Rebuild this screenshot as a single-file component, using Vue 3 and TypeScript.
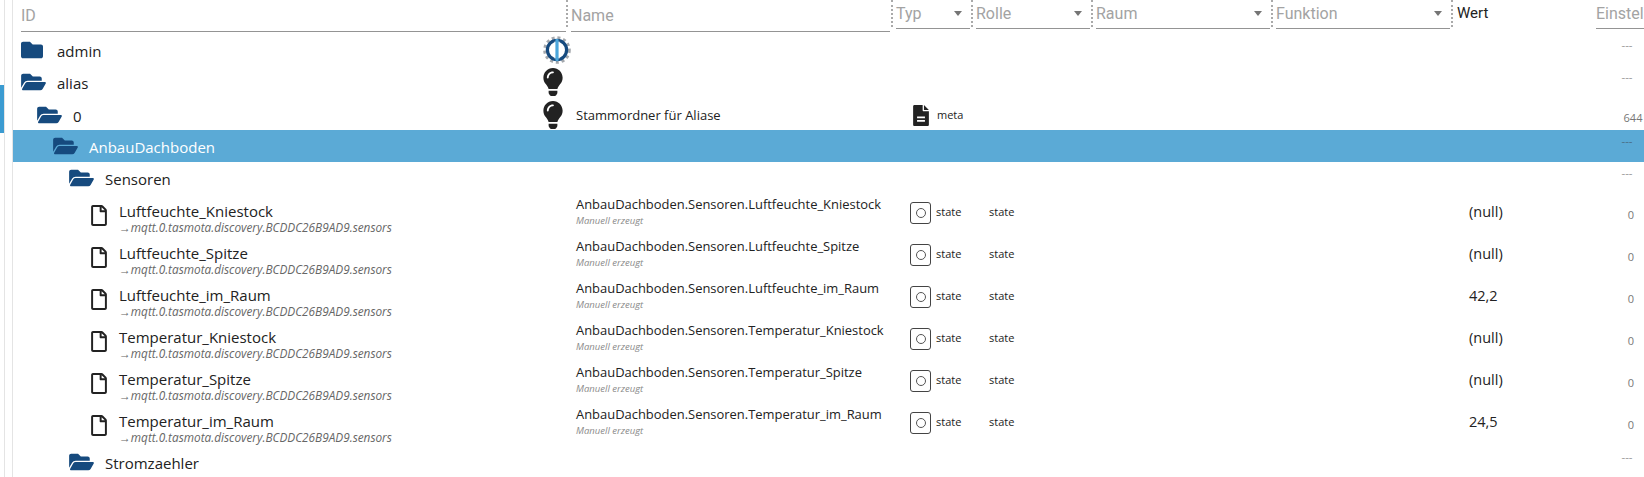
<script setup lang="ts">
interface FolderRow { label: string; level: number; open: boolean; icon?: 'logo' | 'lamp'; name?: string; meta?: boolean; size: string; selected?: boolean }
interface StateRow { label: string; name: string; value: string }

const topRows: FolderRow[] = [
  { label: 'admin', level: 0, open: false, icon: 'logo', size: '---' },
  { label: 'alias', level: 0, open: true, icon: 'lamp', size: '---' },
  { label: '0', level: 1, open: true, icon: 'lamp', name: 'Stammordner für Aliase', meta: true, size: '644' },
  { label: 'AnbauDachboden', level: 2, open: true, size: '---', selected: true },
  { label: 'Sensoren', level: 3, open: true, size: '---' },
]
const stateRows: StateRow[] = [
  { label: 'Luftfeuchte_Kniestock', name: 'AnbauDachboden.Sensoren.Luftfeuchte_Kniestock', value: '(null)' },
  { label: 'Luftfeuchte_Spitze', name: 'AnbauDachboden.Sensoren.Luftfeuchte_Spitze', value: '(null)' },
  { label: 'Luftfeuchte_im_Raum', name: 'AnbauDachboden.Sensoren.Luftfeuchte_im_Raum', value: '42,2' },
  { label: 'Temperatur_Kniestock', name: 'AnbauDachboden.Sensoren.Temperatur_Kniestock', value: '(null)' },
  { label: 'Temperatur_Spitze', name: 'AnbauDachboden.Sensoren.Temperatur_Spitze', value: '(null)' },
  { label: 'Temperatur_im_Raum', name: 'AnbauDachboden.Sensoren.Temperatur_im_Raum', value: '24,5' },
]
const filters = ['Typ', 'Rolle', 'Raum', 'Funktion']
const aliasTarget = '→mqtt.0.tasmota.discovery.BCDDC26B9AD9.sensors'
const folderClosed = 'M464 128H272l-64-64H48C21.49 64 0 85.49 0 112v288c0 26.51 21.49 48 48 48h416c26.51 0 48-21.49 48-48V176c0-26.51-21.49-48-48-48z'
const folderOpen = 'M572.694 292.093L500.27 416.248A63.997 63.997 0 0 1 444.989 448H45.025c-18.523 0-30.064-20.093-20.731-36.093l72.424-124.155A64 64 0 0 1 152 256h399.964c18.523 0 30.064 20.093 20.73 36.093zM152 224h328v-48c0-26.51-21.49-48-48-48H272l-64-64H48C21.49 64 0 85.49 0 112v278.046l69.077-118.418C86.214 242.25 117.989 224 152 224z'
const indent = (level: number) => ({ paddingLeft: `${8 + level * 16}px` })
</script>

<template>
  <div class="page">
    <div class="rail"><div class="rail-mark"></div></div>
    <div class="table">
      <div class="grid head">
        <div class="hcell id-head"><span class="field">ID</span></div>
        <div class="hcell name-head"><span class="field">Name</span></div>
        <div v-for="f in filters" :key="f" class="hcell select-head">
          <span class="field select">{{ f }}<i class="arrow"></i></span>
        </div>
        <div class="hcell value-head">Wert</div>
        <div class="hcell set-head"><span class="field select">Einstel</span></div>
      </div>

      <div v-for="r in topRows" :key="r.label" class="grid row" :class="{ selected: r.selected }">
        <div class="id-cell" :style="indent(r.level)">
          <svg v-if="r.open" class="folder open" viewBox="0 0 576 512"><path :d="folderOpen" /></svg>
          <svg v-else class="folder closed" viewBox="0 0 512 512"><path :d="folderClosed" /></svg>
          <span class="label">{{ r.label }}</span>
          <span v-if="r.icon" class="row-icon">
            <svg v-if="r.icon === 'logo'" class="logo" viewBox="0 0 28 28">
              <circle cx="14" cy="14" r="12.4" fill="none" stroke="#a4a8ad" stroke-width="2.8" stroke-dasharray="3 2.85" />
              <circle cx="14" cy="14" r="9.6" fill="#fff" stroke="#164a7e" stroke-width="3.2" />
              <rect x="11.4" y="5.6" width="5.2" height="16.8" fill="#fff" />
              <rect x="12.4" y="3" width="3.2" height="22" rx="1" fill="#4aa6dc" />
            </svg>
            <svg v-else class="lamp" viewBox="0 0 352 512">
              <path fill="#222" d="M96.06 454.35c.01 6.29 1.87 12.45 5.36 17.69l17.09 25.69a31.99 31.99 0 0 0 26.64 14.28h61.71a31.99 31.99 0 0 0 26.64-14.28l17.09-25.69a31.989 31.989 0 0 0 5.36-17.69l.04-38.35H96.01l.05 38.35zM0 176c0 44.37 16.45 84.85 43.56 115.78 16.52 18.85 42.36 58.23 52.21 91.45.04.26.07.52.11.78h160.24c.04-.26.07-.51.11-.78 9.85-33.22 35.69-72.6 52.21-91.45C335.55 260.85 352 220.37 352 176 352 78.61 272.91-.3 175.45 0 73.44.31 0 82.97 0 176zm176-80c-44.11 0-80 35.89-80 80 0 8.84-7.16 16-16 16s-16-7.16-16-16c0-61.76 50.24-112 112-112 8.84 0 16 7.16 16 16s-7.16 16-16 16z" />
            </svg>
          </span>
        </div>
        <div class="name-cell single">{{ r.name }}</div>
        <div class="typ-cell meta-cell">
          <template v-if="r.meta">
            <svg class="meta-icon" viewBox="0 0 384 512"><path fill="#222" fill-rule="evenodd" d="M232 0H32C14 0 0 14 0 32v448c0 18 14 32 32 32h320c18 0 32-14 32-32V152H256c-13 0-24-11-24-24V0zM264 0v120h120zM96 280h192v40H96zM96 368h192v40H96z" /></svg>
            <span class="typ-text">meta</span>
          </template>
        </div>
        <div></div><div></div><div></div><div></div>
        <div class="size-cell" :class="r.size === '---' ? 'dash' : 'num'">{{ r.size }}</div>
      </div>

      <div v-for="s in stateRows" :key="s.label" class="grid row state-row">
        <div class="id-cell state-id">
          <svg class="file" viewBox="0 0 384 512"><path fill="#222" d="M369.9 97.9L286 14C277 5 264.8-.1 252.1-.1H48C21.5 0 0 21.5 0 48v416c0 26.5 21.5 48 48 48h288c26.5 0 48-21.5 48-48V131.9c0-12.7-5.1-25-14.1-34zM332.1 128H256V51.9l76.1 76.1zM48 464V48h160v104c0 13.3 10.7 24 24 24h104v288H48z" /></svg>
          <div class="stack">
            <span class="label">{{ s.label }}</span>
            <span class="alias">{{ aliasTarget }}</span>
          </div>
        </div>
        <div class="name-cell">
          <span class="name-main">{{ s.name }}</span>
          <span class="name-sub">Manuell erzeugt</span>
        </div>
        <div class="typ-cell state-typ">
          <span class="state-icon"><i></i></span>
          <span class="typ-text">state</span>
        </div>
        <div class="role-cell">state</div>
        <div></div><div></div>
        <div class="value-cell">{{ s.value }}</div>
        <div class="size-cell zero">0</div>
      </div>

      <div class="grid row">
        <div class="id-cell" :style="indent(3)">
          <svg class="folder open" viewBox="0 0 576 512"><path :d="folderOpen" /></svg>
          <span class="label">Stromzaehler</span>
        </div>
        <div></div><div></div><div></div><div></div><div></div><div></div>
        <div class="size-cell dash">---</div>
      </div>
    </div>
  </div>
</template>

<style scoped>
.page {
  display: flex;
  width: 1644px;
  height: 477px;
  overflow: hidden;
  background: #fff;
  color: #222;
  font-family: "Open Sans", "Noto Sans", sans-serif;
}
.rail {
  width: 13px;
  flex: none;
  box-sizing: border-box;
  padding-top: 85px;
  border-right: 1px solid #e4e4e4;
  background: linear-gradient(to right, transparent 4px, #e4e4e4 4px, #e4e4e4 5px, transparent 5px);
}
.rail-mark {
  width: 4px;
  height: 48px;
  background: #3b9bd1;
}
.table {
  flex: none;
  width: 1631px;
}
.grid {
  display: grid;
  grid-template-columns: 555px 325px 80px 120px 180px 180px 143px 48px;
}
.head {
  height: 34px;
  font-family: Roboto, "Liberation Sans", sans-serif;
}
.hcell {
  box-sizing: border-box;
  height: 31px;
  display: flex;
}
.id-head { padding-left: 8px; border-right: 2px dotted #aaa; height: 27px; }
.name-head { padding-left: 3px; border-right: 2px dotted #aaa; height: 27px; }
.select-head { padding: 0 1px 0 3px; border-right: 2px dotted #aaa; height: 27px; }
.value-head { padding: 3px 0 0 4px; font-size: 15px; line-height: 20px; color: #222; }
.field {
  box-sizing: border-box;
  display: block;
  width: 100%;
  height: 32px;
  padding-top: 6px;
  border-bottom: 1.5px solid #949494;
  color: #a3a3a3;
  font-size: 16px;
  line-height: 20px;
  flex: none;
}
.name-head .field { width: calc(100% - 1px); }
.field.select {
  position: relative;
  height: 29px;
  padding-top: 4px;
}
.arrow {
  position: absolute;
  right: 8px;
  top: 11px;
  width: 0;
  height: 0;
  border-left: 4.5px solid transparent;
  border-right: 4.5px solid transparent;
  border-top: 5px solid #757575;
}
.row {
  height: 32px;
  align-items: stretch;
}
.state-row { height: 42px; }
.selected { background: #5baad6; }
.selected .label { color: #fff; }
.id-cell {
  display: flex;
  align-items: center;
  min-width: 0;
}
.folder { flex: none; fill: #164a7e; }
.folder.closed { width: 22px; height: 22px; margin-right: 14px; }
.folder.open { width: 25px; height: 22px; margin-right: 11px; }
.label {
  font-size: 15px;
  line-height: 18px;
  white-space: nowrap;
}
.id-cell > .label { margin-top: 2px; }
.row-icon {
  flex: none;
  width: 28px;
  height: 32px;
  margin-left: auto;
  margin-right: -3px;
  display: flex;
  align-items: center;
}
.logo { width: 28px; height: 28px; }
.lamp { width: 20px; height: 28px; }
.state-id {
  align-items: flex-start;
  padding-left: 78px;
}
.file {
  flex: none;
  width: 16px;
  height: 21px;
  margin: 11px 12px 0 0;
}
.stack {
  display: flex;
  flex-direction: column;
  padding-top: 8px;
}
.alias {
  font-size: 11.8px;
  line-height: 14px;
  font-style: italic;
  color: #666;
  white-space: nowrap;
}
.name-cell {
  display: flex;
  flex-direction: column;
  padding: 2px 0 0 8px;
}
.name-cell.single {
  display: block;
  padding-top: 0;
  font-size: 13px;
  line-height: 34px;
}
.name-main { font-size: 12.95px; line-height: 17px; white-space: nowrap; }
.name-sub {
  font-size: 9.5px;
  line-height: 14px;
  font-style: italic;
  color: #8a8a8a;
  margin-top: 1px;
}
.typ-cell {
  display: flex;
  align-items: center;
  padding-left: 17px;
}
.state-typ { padding-bottom: 6px; }
.meta-cell { padding-left: 20px; }
.meta-icon { width: 16px; height: 21px; margin-right: 8px; flex: none; }
.typ-text { font-size: 11px; line-height: 14px; }
.state-icon {
  box-sizing: border-box;
  flex: none;
  width: 21px;
  height: 22px;
  margin: 1px 5px 0 0;
  border: 1.5px solid #444;
  border-radius: 3px;
  display: flex;
  align-items: center;
  justify-content: center;
}
.state-icon i {
  box-sizing: border-box;
  width: 10px;
  height: 10px;
  border: 1.5px solid #555;
  border-radius: 50%;
}
.role-cell {
  padding-left: 16px;
  font-size: 11px;
  line-height: 36px;
}
.value-cell {
  padding-left: 16px;
  font-size: 14.5px;
  line-height: 36px;
}
.size-cell {
  font-size: 11px;
  color: #777;
  text-align: center;
  line-height: 14px;
  white-space: nowrap;
}
.dash { padding: 4px 0 0 25px; width: 12px; font-size: 11.5px; color: #999; }
.selected .dash { color: #4a6f86; }
.num { padding: 13px 0 0 26px; }
.zero { padding: 14px 0 0 27px; width: 16px; }
</style>

<style>
html, body { margin: 0; background: #fff; overflow: hidden; }
</style>
